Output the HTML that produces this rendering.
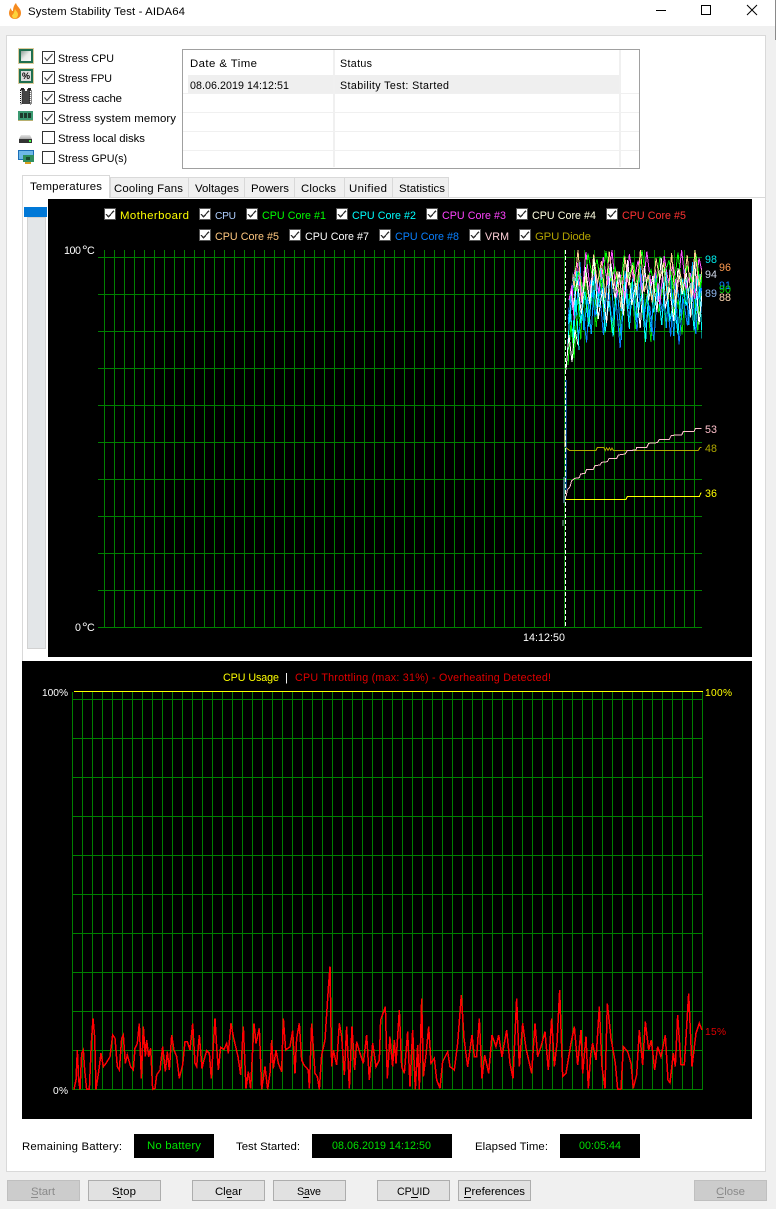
<!DOCTYPE html>
<html><head><meta charset="utf-8"><title>System Stability Test - AIDA64</title>
<style>
html,body{margin:0;padding:0;background:#f0f0f0;width:776px;height:1209px;overflow:hidden}
svg{display:block}
text{font-family:"Liberation Sans",sans-serif;font-size:11.4px;fill:#000;white-space:pre}
text.s{font-size:10.7px}
text.p{font-size:10.2px}
.w text,text.w{fill:#fff}
.crisp *{shape-rendering:crispEdges}
polyline{fill:none;vector-effect:non-scaling-stroke}
</style></head><body>
<svg xmlns="http://www.w3.org/2000/svg" width="776" height="1209" viewBox="0 0 776 1209">
<defs>
<pattern id="v" patternUnits="userSpaceOnUse" x="104" y="0" width="10" height="10"><rect width="1" height="10" fill="#008000"/></pattern>
<pattern id="h" patternUnits="userSpaceOnUse" x="0" y="257" width="10" height="37"><rect width="10" height="1" fill="#008000"/></pattern>
<pattern id="v2" patternUnits="userSpaceOnUse" x="72" y="0" width="10" height="10"><rect width="1" height="10" fill="#008000"/></pattern>
<pattern id="h2" patternUnits="userSpaceOnUse" x="0" y="699" width="10" height="39"><rect width="10" height="1" fill="#008000"/></pattern>
<linearGradient id="g1" x1="0" y1="0" x2="1" y2="1"><stop offset="0" stop-color="#8f9f98"/><stop offset=".5" stop-color="#e8ebe8"/><stop offset="1" stop-color="#f8f8f8"/></linearGradient>
<linearGradient id="g2" x1="0" y1="0" x2="0" y2="1"><stop offset="0" stop-color="#e6e6e6"/><stop offset="1" stop-color="#a8a8a8"/></linearGradient>
<g id="c"><rect x=".5" y=".5" width="12" height="12" fill="#fff" stroke="#333"/><path d="M2.500 6.500L5 9.500L10.500 3" fill="none" stroke="#444" stroke-width="1.100"/></g>
<g id="e"><rect x=".5" y=".5" width="12" height="12" fill="#fff" stroke="#333"/></g>
<g id="lc"><rect x=".5" y=".5" width="11" height="11" fill="#fff" stroke="#555"/><path d="M2 6L4.600 8.800L10 2.600" fill="none" stroke="#333" stroke-width="1.300"/></g>
<clipPath id="tc"><polygon points="566,345 569,300 572,282 575,250 702,250 702,380 566,380"/></clipPath>
<polyline id="n" points="0,12 3,60 6,5 9,48 12,22 15,70 18,0 21,55 24,30 27,66 30,8 33,42 36,18 39,75 42,3 45,58 48,25 51,62 54,10 57,50 60,0 63,68 66,35 69,72 72,6 75,45 78,15 81,64 84,2 87,52 90,28 93,78 96,9 99,47 102,20 105,60 108,0 111,56 114,33 117,70 120,11 123,40 126,17 129,66 132,4 135,74 138,26 141,54 144,7 147,63 150,0 153,49 156,21 159,71 162,13 165,58 168,31 171,44 174,2 177,67 180,24 183,76 186,10 189,53 192,0 195,61 198,19 201,69 204,5 207,46 210,29 213,73"/>
</defs>

<!-- window -->
<rect width="776" height="1209" fill="#f0f0f0"/>
<rect width="776" height="26" fill="#fff"/>
<rect x="775" y="0" width="1" height="40" fill="#8a8a8a"/>
<path d="M16 3C17 7 21 8 21 13C21 17 18 19 15 19C11 19 9 16 9 13C9 11 10 9 11 8C11 10 12 11 13 11C13 8 14 5 16 3Z" fill="#f58a1f"/>
<path d="M15 9C16 11 18 12 18 14.500C18 17 16 18.500 15 18.500C13 18.500 12 17 12 15C13 15 14 13 15 9Z" fill="#fdd23c"/>
<text x="28" y="15" textLength="157">System Stability Test - AIDA64</text>
<g class="crisp" fill="#000"><rect x="656" y="10" width="10" height="1"/></g>
<rect x="701.500" y="5.500" width="9" height="9" fill="none" stroke="#000" shape-rendering="crispEdges"/>
<path d="M747 5L757 15M757 5L747 15" stroke="#000" fill="none"/>
<rect x="6.500" y="35.500" width="759" height="1136" fill="#fff" stroke="#d9d9d9" shape-rendering="crispEdges"/>

<!-- stress list -->
<g class="crisp">
<!-- cpu -->
<rect x="18.500" y="48.500" width="15" height="15" fill="none" stroke="#b89a3a" stroke-dasharray="1 1"/>
<rect x="19" y="49" width="14" height="14" fill="#1f6f4f"/>
<rect x="21" y="51" width="10" height="10" fill="url(#g1)"/>
<!-- fpu -->
<rect x="18.500" y="68.500" width="15" height="15" fill="none" stroke="#b89a3a" stroke-dasharray="1 1"/>
<rect x="19" y="69" width="14" height="14" fill="#1f6f4f"/>
<rect x="21" y="71" width="10" height="10" fill="#dcdcdc"/>
<!-- cache -->
<rect x="22" y="89" width="8" height="15" fill="#444"/>
<rect x="20.500" y="90" width="1.500" height="14" fill="none" stroke="#111" stroke-dasharray="1 1"/>
<rect x="30" y="90" width="1.500" height="14" fill="none" stroke="#111" stroke-dasharray="1 1"/>
<rect x="25" y="89" width="2" height="2" fill="#fff"/>
<rect x="21" y="88" width="3" height="2" fill="#222"/><rect x="28" y="88" width="3" height="2" fill="#222"/>
<!-- memory -->
<rect x="18" y="111" width="15" height="9" fill="#3c9a72"/>
<rect x="20" y="113" width="3" height="5" fill="#1d3b2c"/><rect x="24" y="113" width="3" height="5" fill="#1d3b2c"/><rect x="28" y="113" width="3" height="5" fill="#1d3b2c"/>
<rect x="18" y="120" width="15" height="1" fill="#b8b070"/>
<!-- disk -->
<path d="M21 135H30L32 139H19Z" fill="url(#g2)"/>
<rect x="19" y="139" width="13" height="4" fill="#333"/><rect x="29" y="140" width="2" height="2" fill="#4f4"/>
<!-- gpu -->
<rect x="18" y="150" width="16" height="10" fill="#1c6fb8"/><rect x="19" y="151" width="14" height="8" fill="#6fb8e8"/>
<rect x="23" y="155" width="11" height="7" fill="#2f8f5f"/><rect x="26" y="157" width="4" height="3" fill="#1a4a30"/><rect x="25" y="162" width="6" height="2" fill="#d8a020"/>
</g>
<text class="p" x="22" y="79" style="font-size:9px;font-weight:bold" textLength="8">%</text>
<use href="#c" x="42" y="51"/><use href="#c" x="42" y="71"/><use href="#c" x="42" y="91"/><use href="#c" x="42" y="111"/><use href="#e" x="42" y="131"/><use href="#e" x="42" y="151"/>
<text class="s" x="58" y="62" textLength="56">Stress CPU</text>
<text class="s" x="58" y="82" textLength="54">Stress FPU</text>
<text x="58" y="102" textLength="64">Stress cache</text>
<text x="58" y="122" textLength="118">Stress system memory</text>
<text x="58" y="142" textLength="87">Stress local disks</text>
<text class="s" x="58" y="162" textLength="69">Stress GPU(s)</text>

<!-- log table -->
<g class="crisp">
<rect x="182.500" y="49.500" width="457" height="119" fill="#fff" stroke="#a0a0a0"/>
<rect x="188" y="75" width="433" height="19" fill="#efefef"/>
<rect x="183" y="93" width="456" height="1" fill="#f0f0f0"/><rect x="183" y="112" width="456" height="1" fill="#f0f0f0"/><rect x="183" y="131" width="456" height="1" fill="#f0f0f0"/><rect x="183" y="150" width="456" height="1" fill="#f0f0f0"/>
<rect x="333" y="50" width="2" height="117" fill="#f0f0f0"/><rect x="619" y="50" width="2" height="117" fill="#f0f0f0"/>
</g>
<text x="190" y="67" textLength="67">Date &amp; Time</text>
<text class="s" x="340" y="67" textLength="32">Status</text>
<text class="s" x="190" y="89" textLength="99">08.06.2019 14:12:51</text>
<text class="s" x="340" y="89" textLength="109">Stability Test: Started</text>

<!-- tabs -->
<g class="crisp">
<rect x="110" y="197" width="656" height="1" fill="#d9d9d9"/>
<rect x="22" y="197" width="1" height="464" fill="#d9d9d9"/>
<g fill="#f0f0f0" stroke="#d9d9d9">
<rect x="110.500" y="177.500" width="78" height="20"/><rect x="188.500" y="177.500" width="56" height="20"/><rect x="244.500" y="177.500" width="50" height="20"/><rect x="294.500" y="177.500" width="50" height="20"/><rect x="344.500" y="177.500" width="48" height="20"/><rect x="392.500" y="177.500" width="56" height="20"/>
</g>
<path d="M22.500 198V175.500H109.500V198" fill="#fff" stroke="#d9d9d9"/>
</g>
<text x="30" y="190" textLength="72">Temperatures</text>
<text x="114" y="192" textLength="69">Cooling Fans</text>
<text x="195" y="192" textLength="44">Voltages</text>
<text x="251" y="192" textLength="38">Powers</text>
<text x="301" y="192" textLength="35">Clocks</text>
<text x="349" y="192" textLength="38">Unified</text>
<text x="399" y="192" textLength="46">Statistics</text>

<!-- scrollbar -->
<g class="crisp"><rect x="27.500" y="217.500" width="18" height="431" fill="#e3e6e8" stroke="#d2d2d2"/><rect x="24" y="207" width="23" height="10" fill="#0078d7"/></g>

<!-- temp chart -->
<g class="crisp">
<rect x="48" y="199" width="704" height="458" fill="#000"/>
<rect x="98" y="257" width="604" height="371" fill="url(#h)"/>
<rect x="104" y="250" width="591" height="378" fill="url(#v)"/>
</g>
<g class="crisp">
<use href="#lc" x="104" y="208"/><use href="#lc" x="199" y="208"/><use href="#lc" x="246" y="208"/><use href="#lc" x="336" y="208"/><use href="#lc" x="426" y="208"/><use href="#lc" x="516" y="208"/><use href="#lc" x="606" y="208"/>
<use href="#lc" x="199" y="229"/><use href="#lc" x="289" y="229"/><use href="#lc" x="379" y="229"/><use href="#lc" x="469" y="229"/><use href="#lc" x="519" y="229"/>
</g>
<text x="120" y="219" textLength="69" style="fill:#ff0">Motherboard</text>
<text class="p" x="215" y="219" textLength="21" style="fill:#b0d0ff">CPU</text>
<text class="s" x="262" y="219" textLength="64" style="fill:#0f0">CPU Core #1</text>
<text class="s" x="352" y="219" textLength="64" style="fill:#0ff">CPU Core #2</text>
<text class="s" x="442" y="219" textLength="64" style="fill:#f4f">CPU Core #3</text>
<text class="s" x="532" y="219" textLength="64" style="fill:#ffffe0">CPU Core #4</text>
<text class="s" x="622" y="219" textLength="64" style="fill:#f33">CPU Core #5</text>
<text class="s" x="215" y="240" textLength="64" style="fill:#ffc880">CPU Core #5</text>
<text class="s" x="305" y="240" textLength="64" style="fill:#fff">CPU Core #7</text>
<text class="s" x="395" y="240" textLength="64" style="fill:#0a80ff">CPU Core #8</text>
<text class="s" x="485" y="240" textLength="24" style="fill:#ffd0d8">VRM</text>
<text x="535" y="240" textLength="56" style="fill:#b0a000">GPU Diode</text>

<text class="w s" x="64" y="254" textLength="17">100</text><text class="w" x="82" y="255" style="font-size:14px">°</text><text class="w s" x="87" y="254" textLength="7">C</text>
<text class="w s" x="75" y="631" textLength="6">0</text><text class="w" x="82" y="632" style="font-size:14px">°</text><text class="w s" x="87" y="631" textLength="7">C</text>
<text class="w s" x="523" y="641" textLength="42">14:12:50</text>

<g clip-path="url(#tc)" class="crisp">
<use href="#n" stroke="#00e000" transform="translate(530,268) scale(1.3,.95)"/>
<use href="#n" stroke="#0a80ff" transform="translate(490,274) scale(1.4,.95)"/>
<use href="#n" stroke="#0af" transform="translate(505,262) scale(1.25,1)"/>
<use href="#n" stroke="#0ff" transform="translate(520,268) scale(1.35,.95)"/>
<use href="#n" stroke="#ff50ff" transform="translate(525,250) scale(1.45,.7)"/>
<use href="#n" stroke="#0f0" transform="translate(480,250) scale(1.5,.6)"/>
<use href="#n" stroke="#ffd090" transform="translate(500,250) scale(1.3,.75)"/>
<use href="#n" stroke="#fff" transform="translate(510,258) scale(1.4,.9)"/>
</g>
<g class="crisp">
<polyline stroke="#0ff" points="567,360 570,310 573,345 576,300 579,350"/>
<polyline stroke="#0f0" points="568,365 571,322 574,358 577,315"/>
<polyline stroke="#fff" points="566,370 569,335 572,362 575,330 578,345"/>
<polyline stroke="#ff50ff" points="569,300 572,285 574,320"/>
<polyline stroke="#0a80ff" points="566,380 566,490"/>
<polyline stroke="#ffd090" points="565,430 565,447"/>
<polyline stroke="#7ad" points="564,477 564,503"/>
<polyline stroke="#7a9" points="563,520 563,526"/>
</g>
<path d="M565.500 250V627" stroke="#fff" stroke-dasharray="4 2" shape-rendering="crispEdges" fill="none"/>
<g class="crisp" transform="translate(540,380) scale(.33333)">
<polyline stroke="#b0a800" points="78,203 88,211 168,211 172,203 192,203 196,211 200,204 204,211 208,204 212,211 216,204 220,211 475,211 480,203 485,202"/>
<polyline stroke="#ff0" points="78,358 258,358 262,350 478,350 482,340 485,338"/>
<polyline stroke="#ffc0cb" points="78,350 82,330 90,320 95,302 105,295 118,293 122,282 135,280 140,268 160,268 165,257 180,255 185,247 202,245 207,236 230,236 235,225 255,222 262,212 288,210 290,202 320,202 326,190 352,188 358,178 388,178 394,166 425,165 430,155 462,155 466,146 485,145"/>
</g>
<text class="s" x="705" y="263" textLength="12" style="fill:#0ee">98</text>
<text class="s" x="719" y="271" textLength="12" style="fill:#ff9b50">96</text>
<text class="s" x="705" y="278" textLength="12" style="fill:#cfd8e8">94</text>
<text class="s" x="719" y="289" textLength="12" style="fill:#0a80ff">91</text>
<text class="s" x="719" y="293" textLength="12" style="fill:#0d0">90</text>
<text class="s" x="705" y="297" textLength="12" style="fill:#90b8f0">89</text>
<text class="s" x="719" y="301" textLength="12" style="fill:#ffd8b0">88</text>
<text class="s" x="705" y="433" textLength="12" style="fill:#ffc0cb">53</text>
<text class="s" x="705" y="452" textLength="12" style="fill:#b0a800">48</text>
<text class="s" x="705" y="497" textLength="12" style="fill:#ff0">36</text>

<!-- cpu chart -->
<g class="crisp">
<rect x="22" y="661" width="730" height="458" fill="#000"/>
<rect x="72" y="699" width="631" height="391" fill="url(#h2)"/>
<rect x="72" y="692" width="631" height="398" fill="url(#v2)"/>
<rect x="74" y="691" width="629" height="1" fill="#ff0"/>
</g>
<text class="s" x="223" y="681" textLength="56" style="fill:#ff0">CPU Usage</text>
<text x="285" y="681" style="fill:#fff">|</text>
<text class="s" x="295" y="681" textLength="256" style="fill:#e00000">CPU Throttling (max: 31%) - Overheating Detected!</text>
<text class="w p" x="42" y="696" textLength="26">100%</text>
<text class="p" x="705" y="696" textLength="27" style="fill:#ff0">100%</text>
<text class="w p" x="53" y="1094" textLength="15">0%</text>
<text class="p" x="705" y="1035" textLength="21" style="fill:#e00000">15%</text>
<g class="crisp" transform="translate(0,960) scale(.33333)" stroke-width="1.500">
<polyline stroke="#f00" points="222,388 228,360 232,270 236,360 240,388 245,280 250,270 254,330 260,388 268,388 274,250 279,175 284,230 288,388 296,335 303,280 310,320 318,310 330,290 338,225 345,235 352,320 358,330 365,235 370,225 376,310 382,285 392,320 400,330 405,265 412,250 418,190 424,355 430,200 436,290 440,240 446,290 452,265 458,388 465,385 470,345 480,330 488,260 496,335 502,275 508,330 515,225 522,270 530,290 538,355 548,315 555,245 562,245 570,270 578,190 585,310 590,320 598,225 606,325 612,300 620,272 628,280 634,355 645,175 650,260 655,330 662,262 672,268 680,250 685,280 693,190 700,230 714,290 722,345 730,200 738,385 745,335 752,385 762,190 768,250 778,205 785,388 795,320 803,388 810,340 815,240 820,325 828,270 835,310 845,335 850,175 857,270 870,260 878,212 885,340 890,235 898,190 905,300 912,315 925,330 928,385 935,190 945,340 952,350 958,388 965,285 975,240 985,85 990,20 995,320 1000,270 1010,315 1018,190 1025,230 1033,345 1040,200 1048,385 1056,200 1064,330 1070,245 1080,280 1090,310 1100,225 1108,360 1118,250 1128,320 1138,300 1142,180 1156,140 1162,355 1170,230"/>
<polyline stroke="#f00" transform="translate(1158,0)" points="12,235 20,320 25,240 30,310 40,150 47,320 55,340 65,215 72,380 80,210 88,388 95,255 100,388 107,115 112,350 120,285 128,200 135,310 145,295 152,360 162,385 170,305 185,275 192,320 205,330 215,250 226,105 234,235 245,320 258,225 265,290 272,290 280,175 288,355 296,285 308,340 318,225 330,260 338,225 348,290 362,210 372,310 381,355 392,115 400,320 410,190 420,265 437,340 447,190 455,290 465,260 477,215 487,330 497,175 505,320 513,250 521,90 530,350 540,340 555,250 565,200 575,315 585,210 590,340 600,230 607,385 614,285 620,250 630,300 640,140 648,320 657,385 664,130 675,235 688,310 695,388 705,388 712,260 725,275 735,310 742,385 752,345 760,210 770,315 778,185 788,270 796,240 806,330 815,260 825,290 838,225 846,360 852,368 862,280 868,320 875,165 885,315 895,315 908,100 918,320 930,220 940,190 948,210"/>
</g>

<!-- status -->
<g class="crisp"><rect x="134" y="1134" width="80" height="24" fill="#000"/><rect x="312" y="1134" width="140" height="24" fill="#000"/><rect x="560" y="1134" width="80" height="24" fill="#000"/></g>
<text x="22" y="1150" textLength="100">Remaining Battery:</text>
<text x="147" y="1149" textLength="54" style="fill:#00e000">No battery</text>
<text x="236" y="1150" textLength="64">Test Started:</text>
<text class="s" x="332" y="1149" textLength="99" style="fill:#00e000">08.06.2019 14:12:50</text>
<text x="475" y="1150" textLength="73">Elapsed Time:</text>
<text class="s" x="579" y="1149" textLength="42" style="fill:#00e000">00:05:44</text>

<!-- buttons -->
<g class="crisp">
<rect x="7.500" y="1180.500" width="72" height="20" fill="#ccc" stroke="#bfbfbf"/>
<rect x="694.500" y="1180.500" width="72" height="20" fill="#ccc" stroke="#bfbfbf"/>
<g fill="#e1e1e1" stroke="#adadad">
<rect x="88.500" y="1180.500" width="72" height="20"/><rect x="192.500" y="1180.500" width="72" height="20"/><rect x="273.500" y="1180.500" width="72" height="20"/><rect x="377.500" y="1180.500" width="72" height="20"/><rect x="458.500" y="1180.500" width="72" height="20"/>
</g>
<rect x="31" y="1197" width="7" height="1" fill="#8a8a8a"/><rect x="717" y="1197" width="7" height="1" fill="#8a8a8a"/>
<rect x="117" y="1197" width="4" height="1"/><rect x="227" y="1197" width="5" height="1"/><rect x="303" y="1197" width="6" height="1"/><rect x="411" y="1197" width="7" height="1"/><rect x="464" y="1197" width="7" height="1"/>
</g>
<text x="31" y="1195" textLength="24" style="fill:#8a8a8a">Start</text>
<text x="112" y="1195" textLength="24">Stop</text>
<text x="215" y="1195" textLength="27">Clear</text>
<text class="s" x="297" y="1195" textLength="24">Save</text>
<text class="s" x="397" y="1195" textLength="33">CPUID</text>
<text x="464" y="1195" textLength="61">Preferences</text>
<text x="716" y="1195" textLength="29" style="fill:#8a8a8a">Close</text>
</svg>
</body></html>
